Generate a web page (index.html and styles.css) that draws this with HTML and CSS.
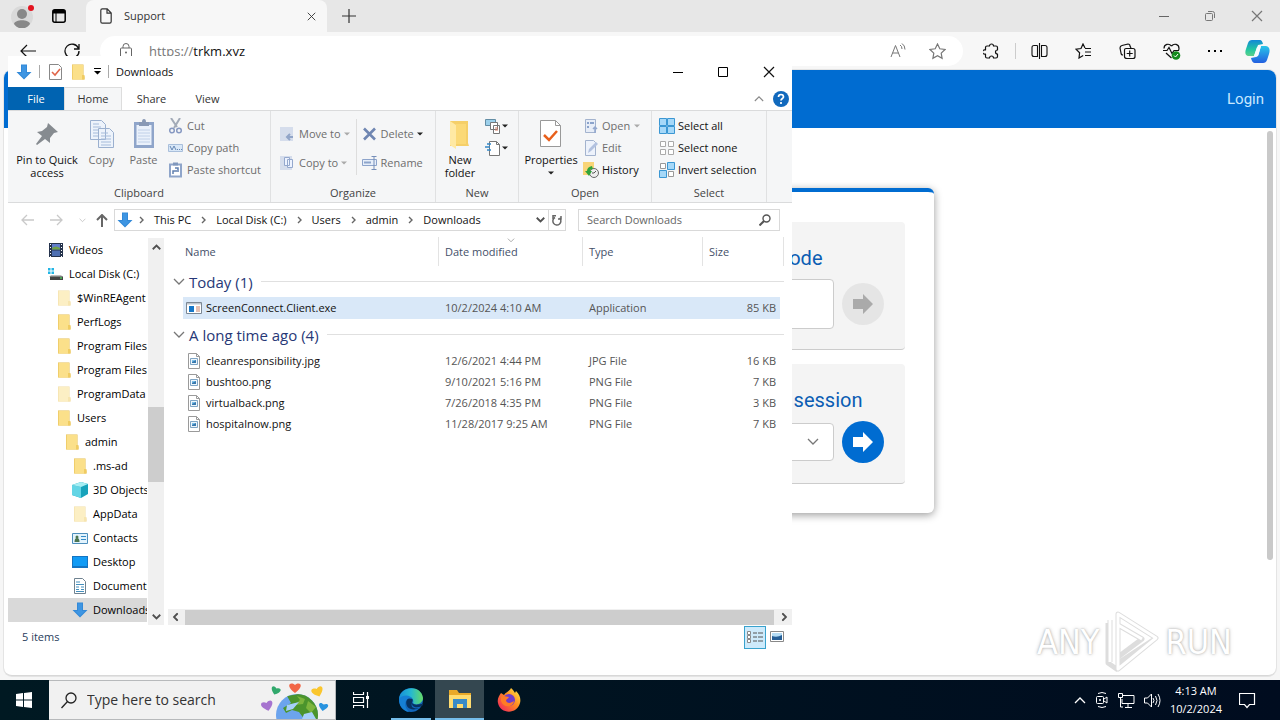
FILE: index.html
```
<!DOCTYPE html>
<html lang="en">
<head>
<meta charset="utf-8">
<meta name="viewport" content="width=device-width, initial-scale=1">
<title>Support</title>
<link rel="stylesheet" href="styles.css">
</head>
<body>
<svg class="defs" aria-hidden="true">
  <symbol id="folder" viewBox="0 0 16 16"><path d="M2 .5h11.5v11l1 1V15.500H2z" fill="#e5bd4d"/><path d="M2.500 1h10.500v12l-1 2.500H2.500z" fill="#fbe08a"/><path d="M12 11h2.500v4.500H12z" fill="#f0cc62"/></symbol>
  <symbol id="down" viewBox="0 0 16 16"><path d="M5 .5h6V8h4.500L8 15.500.5 8H5z" fill="#3289d8"/><path d="M6 1.500h4V9h3L8 14 3 9h3z" fill="#3e95e2"/></symbol>
  <symbol id="image" viewBox="0 0 16 16"><path d="M2.500.5h8l3 3v12h-11z" fill="#fff" stroke="#9a9a9a"/><path d="M10.500.5v3h3" fill="none" stroke="#9a9a9a"/><path d="M4.500 5.500h7v6h-7z" fill="#eef6fb" stroke="#7fa5c5"/><path d="M6 7h4v3H6z" fill="#3778ae"/><path d="M6 7h4L6 9z" fill="#7cc0ea"/></symbol>
  <symbol id="crumb" viewBox="0 0 7 8"><path d="M2 1l3 3-3 3" fill="none" stroke="#666" stroke-width="1.400"/></symbol>
  <symbol id="tri" viewBox="0 0 6 4"><path d="M0 .5h6L3 3.500z" fill="currentColor"/></symbol>
  <symbol id="chev" viewBox="0 0 12 8"><path d="M1 1l5 5 5-5" fill="none" stroke="currentColor" stroke-width="1.300"/></symbol>
  <symbol id="chev-bold" viewBox="0 0 12 8"><path d="M1 1l5 5 5-5" fill="none" stroke="currentColor" stroke-width="2.400"/></symbol>
  <symbol id="cross" viewBox="0 0 12 12"><path d="M1 1l10 10M11 1L1 11" fill="none" stroke="currentColor" stroke-width="1.200"/></symbol>
  <symbol id="go" viewBox="0 0 20 20"><path d="M0 5h10V0l10 10-10 10v-5H0z" fill="currentColor"/></symbol>
</svg>

<div class="desktop">
  <section class="browser" aria-label="Browser">
    <div class="tabstrip">
      <button class="plain profile" aria-label="Profile"><svg width="24" height="24" viewBox="0 0 24 24"><circle cx="11" cy="13" r="11" fill="#d9d9d9"/><circle cx="11" cy="10" r="5" fill="#888"/><path d="M3 20c1-5 15-5 16 0-4 6-12 6-16 0z" fill="#888"/><circle cx="20" cy="4" r="3" fill="#e3131f"/></svg></button>
      <button class="plain workspaces" aria-label="Tab actions"><svg width="14" height="14" viewBox="0 0 14 14"><rect x=".8" y=".8" width="12.400" height="12.400" rx="2" fill="none" stroke="#000" stroke-width="1.500"/><path d="M1 1h12v3.500H1zM3.500 4h1v9h-1z"/></svg></button>
      <div class="tab">
        <svg width="12" height="16" viewBox="0 0 12 16"><path d="M.8 2.500C.8 1.500 1.300.8 2.300.8h4.900l4 4.200v8.500c0 1-.5 1.700-1.500 1.700H2.300c-1 0-1.500-.7-1.500-1.700zM7 1v4.200h4" fill="none" stroke="#333" stroke-width="1.200"/></svg>
        <span class="tab-title">Support</span>
        <button class="plain" aria-label="Close tab"><svg class="i9"><use href="#cross"/></svg></button>
      </div>
      <button class="plain newtab" aria-label="New tab"><svg width="14" height="14" viewBox="0 0 14 14"><path d="M7 0v14M0 7h14" stroke="#333" stroke-width="1.200"/></svg></button>
      <div class="browser-controls">
        <button class="plain" aria-label="Minimize"><svg width="10" height="10" viewBox="0 0 10 10"><path d="M0 5.500h10" stroke="#666"/></svg></button>
        <button class="plain" aria-label="Restore"><svg width="10" height="10" viewBox="0 0 10 10"><path d="M.5 3.500q0-1 1-1h5q1 0 1 1v5q0 1-1 1h-5q-1 0-1-1zM3 .5h4.500q2 0 2 2V7" fill="none" stroke="#777"/></svg></button>
        <button class="plain" aria-label="Close"><svg class="i12"><use href="#cross"/></svg></button>
      </div>
    </div>
    <div class="toolbar">
      <button class="plain" aria-label="Back"><svg width="16" height="14" viewBox="0 0 16 14"><path d="M16 7H1M7 1L1 7l6 6" fill="none" stroke="#111" stroke-width="1.200"/></svg></button>
      <button class="plain" aria-label="Refresh"><svg width="16" height="16" viewBox="0 0 16 16"><path d="M14.500 5.500A7 7 0 1 0 15 8M15 1v5h-5" fill="none" stroke="#111" stroke-width="1.300"/></svg></button>
      <div class="omnibox">
        <svg width="12" height="16" viewBox="0 0 12 16"><path d="M1.500 5h9q1 0 1 1v8q0 1-1 1h-9q-1 0-1-1V6q0-1 1-1zM3 5V3.500a3 3 0 0 1 6 0V5" fill="none" stroke="#666"/><circle cx="6" cy="9.500" r="1" fill="#666"/></svg>
        <label class="url"><span>https://</span><input type="text" value="trkm.xyz" aria-label="Address"></label>
        <svg width="17" height="16" viewBox="0 0 17 16"><path d="M1 14L5.500 2.500 10 14M2.500 10h6M10 2q2 1 2 4M12 .5q3 2 3 6" fill="none" stroke="#777"/></svg>
        <svg width="17" height="17" viewBox="0 0 17 17"><path d="M8.500 1l2.300 4.800 5.200.7-3.800 3.600.9 5.200-4.600-2.500-4.600 2.500.9-5.200L1 6.500l5.200-.7z" fill="none" stroke="#777" stroke-width="1.200"/></svg>
      </div>
      <div class="tools">
        <button class="plain" aria-label="Extensions"><svg width="17" height="17" viewBox="0 0 17 17"><path d="M4 3h2.500a2 2 0 1 1 4 0H13q1.500 0 1.500 1.500V7a1.600 1.600 0 1 0 0 4v2.500q0 1.500-1.500 1.500h-2.500a2 2 0 0 0-4 0H4q-1.500 0-1.500-1.500V11a2.200 2.200 0 1 1 0-4V4.500Q2.500 3 4 3z" fill="none" stroke="#111" stroke-width="1.200" stroke-linejoin="round"/></svg></button>
        <span class="tool-rule"></span>
        <button class="plain" aria-label="Split screen"><svg width="17" height="16" viewBox="0 0 17 16"><path d="M6.500 2.500H3q-2 0-2 2v7q0 2 2 2h3.500V2.500M8.500 0v16M10.500 2.500H14q2 0 2 2v7q0 2-2 2h-3.500z" fill="none" stroke="#111" stroke-width="1.100"/></svg></button>
        <button class="plain" aria-label="Favorites"><svg width="17" height="16" viewBox="0 0 17 16"><path d="M10 5L8 1 6 5.500l-5 .7 3.600 3.500L4 15l4.200-2.500M10 5.500h6M10 9h6M10 12.500h6" fill="none" stroke="#111" stroke-width="1.200"/></svg></button>
        <button class="plain" aria-label="Collections"><svg width="17" height="17" viewBox="0 0 17 17"><path d="M4 12q-2 0-2-2L1 5q0-2 2-2.500L9 1q2 0 2 2l1 2M7 5.500h7q2 0 2 2v6q0 2-2 2H8q-2.500 0-2.500-2V7q0-1.500 1.500-1.500zM10.700 7.500v6M7.700 10.500h6" fill="none" stroke="#111" stroke-width="1.200"/></svg></button>
        <button class="plain" aria-label="Browser essentials"><svg width="18" height="17" viewBox="0 0 18 17"><path d="M8.500 3C6 0 1 1 1 5.500h0M8.500 3C11 0 16 1 16 5.500q0 1-.7 2.500M3 10l5.500 5M0 7.500h4l2-3 3 6 2-3h4" fill="none" stroke="#111" stroke-width="1.200"/><circle cx="13" cy="12.500" r="4.300" fill="#138a1d"/><path d="M11 12.500l1.500 1.500 2.500-3" fill="none" stroke="#fff"/></svg></button>
        <button class="plain" aria-label="More"><svg width="14" height="4" viewBox="0 0 14 4"><path d="M0 1h2v2H0zM6 1h2v2H6zM12 1h2v2h-2z"/></svg></button>
        <button class="plain copilot" aria-label="Copilot"><svg width="25" height="23" viewBox="0 0 25 23"><defs><linearGradient id="cp1" x2="0" y2="1"><stop stop-color="#1388d7"/><stop offset=".6" stop-color="#22c7a1"/><stop offset="1" stop-color="#5fd08a"/></linearGradient><linearGradient id="cp2" x2="0" y2="1"><stop stop-color="#28c5e9"/><stop offset="1" stop-color="#235fe0"/></linearGradient></defs><path d="M7 0h8q2 0 3 4l-5 1-4 11H3q-4-1-2-7l2-6q1-3 4-3z" fill="url(#cp1)"/><path d="M16 6h5q5 1 3 8l-2 6q-1 3-4 3h-8q-3 0-4-5l5-1q2 0 3-4z" fill="url(#cp2)"/><path d="M12 7l4-1-3 10H9z" fill="#f5fbff"/></svg></button>
      </div>
    </div>
    <div class="viewport">
      <header class="site-header"><a href="#">Login</a></header>
      <div class="site-body">
        <main class="card">
          <form class="panel">
            <h2 class="code-title"><label for="code">Code</label></h2>
            <div class="field"><input id="code" class="box tall" type="text"><button class="go off" type="button" disabled aria-label="Join with code"><svg class="i20"><use href="#go"/></svg></button></div>
          </form>
          <form class="panel second">
            <h2 class="session-title"><label for="session">session</label></h2>
            <div class="field"><span class="select-wrap"><select id="session" class="box"><option></option></select><svg class="i12"><use href="#chev"/></svg></span><button class="go" type="button" aria-label="Join session"><svg class="i20"><use href="#go"/></svg></button></div>
          </form>
        </main>
        <div class="page-scroll"></div>
      </div>
    </div>
  </section>

  <section class="explorer" aria-label="Downloads">
    <div class="titlebar">
      <svg class="i16"><use href="#down"/></svg><span class="tick"></span>
      <svg width="14" height="16" viewBox="0 0 14 16"><path d="M.5.5h9l3 3v12H.5z" fill="#fff" stroke="#888"/><path d="M3 8l3 3 5-6" fill="none" stroke="#e0664a" stroke-width="1.600"/></svg>
      <svg class="i16"><use href="#folder"/></svg>
      <svg class="qat" viewBox="0 0 7 7"><path d="M0 0h7v1H0zM0 3h7L3.500 6.500z"/></svg><span class="tick"></span>
      <span class="title">Downloads</span>
      <div class="controls">
        <button class="plain" aria-label="Minimize"><svg width="10" height="10" viewBox="0 0 10 10"><path d="M0 5.500h10" stroke="#000"/></svg></button>
        <button class="plain" aria-label="Maximize"><svg width="10" height="10" viewBox="0 0 10 10"><path d="M.5.5h9v9h-9z" fill="none" stroke="#000"/></svg></button>
        <button class="plain" aria-label="Close"><svg class="i12"><use href="#cross"/></svg></button>
      </div>
    </div>
    <nav class="ribbon-tabs">
      <button class="plain file">File</button><button class="plain home">Home</button><button class="plain share">Share</button><button class="plain view">View</button>
      <div class="help"><svg class="collapse"><use href="#chev"/></svg><svg width="16" height="16" viewBox="0 0 16 16"><circle cx="8" cy="8" r="8" fill="#1169bd"/><path d="M5.500 6q0-2.500 2.500-2.500T10.500 6C10.500 7.500 8 7.500 8 9.500M8 11v2" fill="none" stroke="#fff" stroke-width="1.700"/></svg></div>
    </nav>
    <div class="ribbon">
      <div class="group g-clip">
        <div class="group-body">
          <button class="plain big pin"><svg width="32" height="32" viewBox="0 0 32 32"><path d="M17 5l10 9-4 1-4 5 0 5-5-4-8 6-1-1 6-8-5-4 5-1 5-4z" fill="#868b90"/></svg><span>Pin to Quick access</span></button>
          <button class="plain big copy dim"><svg width="32" height="32" viewBox="0 0 32 32"><path d="M4.500 2.500h11l4 4v15h-15zM12.500 10.500h11l4 4v15h-15z" fill="#edf3fb" stroke="#9bb0cf"/><path d="M7 6h6M7 9h8M7 12h5M7 15h5M7 18h5M15 15h7M15 18h10M15 21h10M15 24h10M15 27h10" stroke="#a5bbda"/></svg><span>Copy</span></button>
          <button class="plain big paste dim"><svg width="32" height="32" viewBox="0 0 32 32"><path d="M6 4h20v26H6z" fill="#8fa5ca"/><path d="M8.500 7h15v20h-15z" fill="#eaf1fb"/><path d="M11 4h3q0-3 2-3t2 3h3v4H11z" fill="#8999b5"/><path d="M10 12h12M10 15h12M10 18h12M10 21h12M10 24h12" stroke="#c0d0e8"/></svg><span>Paste</span></button>
          <div class="stack">
            <button class="plain dim"><svg class="i16" viewBox="0 0 16 16"><path d="M3 0l6 9M12 0L6 10" stroke="#a3abb8" stroke-width="2"/><circle cx="4" cy="12.500" r="2.300" fill="none" stroke="#8799c2" stroke-width="1.500"/><circle cx="11" cy="12.500" r="2.300" fill="none" stroke="#8799c2" stroke-width="1.500"/></svg>Cut</button>
            <button class="plain dim"><svg class="i16" viewBox="0 0 16 16"><path d="M.5 4.500h14v7H.5z" fill="#d8e7f7" stroke="#a9bfdb"/><path d="M2 6l2 4 2-4 2 4M9 9.500h1M11 9.500h1M13 9.500h1" fill="none" stroke="#6688b5"/></svg>Copy path</button>
            <button class="plain dim"><svg class="i16" viewBox="0 0 16 16"><path d="M2 2.500h11v12H2z" fill="#fff" stroke="#8fa5ca" stroke-width="2"/><path d="M5 .5h5v3H5z" fill="#8098bd"/><path d="M5 12V9h4M7 6h3v4" fill="none" stroke="#6080b0" stroke-width="1.500"/></svg>Paste shortcut</button>
          </div>
        </div><div class="group-name">Clipboard</div>
      </div>
      <div class="group g-org">
        <div class="group-body two">
          <div class="stack wide">
            <button class="plain dim"><svg class="i16" viewBox="0 0 16 16"><path d="M0 1h13v14H0z" fill="#d5ddec"/><path d="M13 11H7m3-3l-3 3 3 3" fill="none" stroke="#91a5c8" stroke-width="2"/></svg>Move to<svg class="tri"><use href="#tri"/></svg></button>
            <button class="plain dim"><svg class="i16" viewBox="0 0 16 16"><path d="M0 1h12v14H0z" fill="#d5ddec"/><path d="M4.500 2.500h5v8h-5zM7.500 4.500h5v8h-5z" fill="#edf3ff" stroke="#94a8cd"/></svg>Copy to<svg class="tri"><use href="#tri"/></svg></button>
          </div>
          <span class="inner-rule"></span>
          <div class="stack wide">
            <button class="plain dim"><svg class="i16" viewBox="0 0 16 16"><path d="M2 2.500l11 11M13 2.500l-11 11" stroke="#6f86b2" stroke-width="2.600"/></svg>Delete<svg class="tri dark"><use href="#tri"/></svg></button>
            <button class="plain dim"><svg class="i16" viewBox="0 0 16 16"><path d="M.5 4.500h14v6H.5z" fill="#e7effa" stroke="#8da4cb"/><path d="M2 7.500h7" stroke="#8da4cb" stroke-width="2"/><path d="M9.500 1.500h5M12 2v12M9.500 14.500h5" stroke="#768fb9"/></svg>Rename</button>
          </div>
        </div><div class="group-name">Organize</div>
      </div>
      <div class="group g-new">
        <div class="group-body">
          <button class="plain big newf"><svg width="32" height="32" viewBox="0 0 32 32"><path d="M6 3h18v22l1 3H6z" fill="#f5cf69"/><path d="M6 3l6 4v24l-6-4z" fill="#ffe9a4"/><path d="M12 6h10v20H12z" fill="#fbd977"/></svg><span>New folder</span></button>
          <div class="stack mini">
            <button class="plain" aria-label="New item"><svg class="i16" viewBox="0 0 16 16"><path d="M.5 1.500h10v6H.5z" fill="#9cd0eb" stroke="#638da5"/><path d="M5.500 4.500h7v7h-7zM8.500 7.500h6v8h-6z" fill="#fff" stroke="#777"/><path d="M10 10h3M10 12h3" stroke="#d67c65"/></svg><svg class="tri dark"><use href="#tri"/></svg></button>
            <button class="plain" aria-label="Easy access"><svg class="i16" viewBox="0 0 16 16"><path d="M4.500 1.500h7l3 3v11h-10z" fill="#fff" stroke="#777"/><path d="M11.500 1.500v3h3" fill="none" stroke="#777"/><path d="M2 4h4M0 7h5M2 10h4" stroke="#3388c8" stroke-width="1.500"/></svg><svg class="tri dark"><use href="#tri"/></svg></button>
          </div>
        </div><div class="group-name">New</div>
      </div>
      <div class="group g-open">
        <div class="group-body">
          <button class="plain big props"><svg width="32" height="32" viewBox="0 0 32 32"><path d="M5.500 2.500h15l5 5v21h-20z" fill="#fff" stroke="#999"/><path d="M20.500 2.500v5h5" fill="none" stroke="#999"/><path d="M9 17l5 5 8-9" fill="none" stroke="#e8601c" stroke-width="2.500"/></svg><span>Properties</span><svg class="tri dark"><use href="#tri"/></svg></button>
          <div class="stack">
            <button class="plain dim"><svg class="i16" viewBox="0 0 16 16"><path d="M2.500 1.500h10v13h-10z" fill="#e7edf7" stroke="#a3b3ce"/><path d="M4 4h2v2H4zM4 8h2v2H4zM7 4h4v2H7z" fill="#8ba3cb"/><path d="M12 15V9m-2 2l2-2 2 2" fill="none" stroke="#93a8ce" stroke-width="1.500"/></svg>Open<svg class="tri"><use href="#tri"/></svg></button>
            <button class="plain dim"><svg class="i16" viewBox="0 0 16 16"><path d="M2.500.5h8l2 2v13h-10z" fill="#edf2fb" stroke="#a3b3ce"/><path d="M5 13l1-4 7-7 2 2-7 7z" fill="#b2c1df"/></svg>Edit</button>
            <button class="plain"><svg class="i16" viewBox="0 0 16 16"><path d="M0 0h11v13H0z" fill="#f8d477"/><circle cx="11" cy="11" r="4.500" fill="#eee" stroke="#666"/><path d="M11 11l2-2M11 11h-2" stroke="#555"/><path d="M9 4Q4 5 4 9H2l4 5 3-5H7q0-2 3-2z" fill="#31a43b"/></svg>History</button>
          </div>
        </div><div class="group-name">Open</div>
      </div>
      <div class="group g-sel">
        <div class="group-body">
          <div class="stack">
            <button class="plain"><svg class="i16" viewBox="0 0 16 16"><path d="M.5.5h7v7h-7zM8.500.5h7v7h-7zM.5 8.500h7v7h-7zM8.500 8.500h7v7h-7z" fill="#a6d8f8" stroke="#3b97d3"/></svg>Select all</button>
            <button class="plain"><svg class="i16" viewBox="0 0 16 16"><path d="M1.500 1.500h5v5h-5zM9.500 1.500h5v5h-5zM1.500 9.500h5v5h-5zM9.500 9.500h5v5h-5z" fill="#fff" stroke="#aaa"/></svg>Select none</button>
            <button class="plain"><svg class="i16" viewBox="0 0 16 16"><path d="M1.500 1.500h5v5h-5zM9.500 9.500h5v5h-5z" fill="#fff" stroke="#999"/><path d="M8.500.5h7v7h-7zM.5 8.500h7v7h-7z" fill="#a6d8f8" stroke="#3b97d3"/></svg>Invert selection</button>
          </div>
        </div><div class="group-name">Select</div>
      </div>
    </div>

    <div class="address-row">
      <button class="plain" aria-label="Back"><svg width="13" height="12" viewBox="0 0 13 12"><path d="M13 6H1M6 1L1 6l5 5" fill="none" stroke="#c9c9c9" stroke-width="1.300"/></svg></button>
      <button class="plain" aria-label="Forward"><svg width="13" height="12" viewBox="0 0 13 12"><path d="M0 6h12M7 1l5 5-5 5" fill="none" stroke="#c9c9c9" stroke-width="1.300"/></svg></button>
      <button class="plain recent" aria-label="Recent"><svg class="tiny"><use href="#chev"/></svg></button>
      <button class="plain go-up" aria-label="Up"><svg width="12" height="13" viewBox="0 0 12 13"><path d="M6 13V1M1 6l5-5 5 5" fill="none" stroke="#666" stroke-width="2"/></svg></button>
      <div class="address">
        <svg class="i16 place"><use href="#down"/></svg><svg class="crumb"><use href="#crumb"/></svg><button class="plain">This PC</button><svg class="crumb"><use href="#crumb"/></svg><button class="plain">Local Disk (C:)</button><svg class="crumb"><use href="#crumb"/></svg><button class="plain">Users</button><svg class="crumb"><use href="#crumb"/></svg><button class="plain">admin</button><svg class="crumb"><use href="#crumb"/></svg><button class="plain">Downloads</button>
        <button class="plain drop" aria-label="Previous locations"><svg class="small"><use href="#chev-bold"/></svg></button>
        <button class="plain refresh" aria-label="Refresh"><svg width="10" height="11" viewBox="0 0 10 11"><path d="M3 2.500A4 4 0 1 0 7.500 3M4 .8H1v3.500M9 1v3H6" fill="none" stroke="#666" stroke-width="1.500"/></svg></button>
      </div>
      <label class="search"><input type="text" placeholder="Search Downloads" aria-label="Search Downloads"><svg width="12" height="12" viewBox="0 0 12 12"><circle cx="7.500" cy="4.500" r="3.500" fill="none" stroke="#555" stroke-width="1.400"/><path d="M5 7l-4.500 4.500" stroke="#555" stroke-width="2"/></svg></label>
    </div>

    <div class="content">
      <ul class="tree">
        <li><svg class="i16" viewBox="0 0 16 16"><path d="M1 1h14v14H1z" fill="#25334d"/><path d="M4 2h8v5.500H4z" fill="#627dcc"/><path d="M4 6q4-3 8 0v1.500H4z" fill="#71a347"/><path d="M4 8.500h8V14H4z" fill="#4e6fb2"/><path d="M2.500 2v13M13.500 2v13" stroke="#fff" stroke-dasharray="1 2"/></svg>Videos</li>
        <li><svg class="i16" viewBox="0 0 16 16"><path d="M0 2h2.500v2.500H0zM3.500 2H6v2.500H3.500zM0 5.500h2.500V8H0zM3.500 5.500H6V8H3.500z" fill="#22b5e5"/><path d="M3 9h10l2 2H1z" fill="#bbb"/><path d="M2 10.500h13V14H2z" fill="#444"/><path d="M12 12h2" stroke="#5f6"/></svg>Local Disk (C:)</li>
        <li class="l1 faded"><svg class="i16"><use href="#folder"/></svg>$WinREAgent</li>
        <li class="l1"><svg class="i16"><use href="#folder"/></svg>PerfLogs</li>
        <li class="l1"><svg class="i16"><use href="#folder"/></svg>Program Files</li>
        <li class="l1"><svg class="i16"><use href="#folder"/></svg>Program Files (x86)</li>
        <li class="l1 faded"><svg class="i16"><use href="#folder"/></svg>ProgramData</li>
        <li class="l1"><svg class="i16"><use href="#folder"/></svg>Users</li>
        <li class="l2"><svg class="i16"><use href="#folder"/></svg>admin</li>
        <li class="l3"><svg class="i16"><use href="#folder"/></svg>.ms-ad</li>
        <li class="l3"><svg class="i16" viewBox="0 0 16 16"><path d="M0 3l9-3 7 2v10l-7 4-9-3z" fill="#17a3bb"/><path d="M0 3l9 2v11l-9-3z" fill="#63d5e5"/><path d="M0 3l9-3 7 2-7 3z" fill="#a7eef3"/></svg>3D Objects</li>
        <li class="l3 faded"><svg class="i16"><use href="#folder"/></svg>AppData</li>
        <li class="l3"><svg class="i16" viewBox="0 0 16 16"><path d="M.5 3.500h15v10H.5z" fill="#e2f3fd" stroke="#4d8ebc"/><circle cx="5" cy="7" r="1.500" fill="#4b7551"/><path d="M2.500 12q0-4 2.500-4t2.500 4z" fill="#4b7551"/><path d="M9 6.500h5M9 9.500h5" stroke="#348bc7"/></svg>Contacts</li>
        <li class="l3"><svg class="i16" viewBox="0 0 16 16"><path d="M0 2h16v12H0z" fill="#1474c2"/><path d="M1 3h14v9H1z" fill="#119bf5"/></svg>Desktop</li>
        <li class="l3"><svg class="i16" viewBox="0 0 16 16"><path d="M2.500.5h8l3 3v12h-11z" fill="#fff" stroke="#6f8290"/><path d="M4 4h4M4 6.500h8M4 9h3M9 9h3M4 11.500h3M9 11.500h3M4 13.500h8" stroke="#448fbd"/></svg>Documents</li>
        <li class="l3 current"><svg class="i16"><use href="#down"/></svg>Downloads</li>
      </ul>
      <div class="vscroll"><svg class="small up"><use href="#chev-bold"/></svg><span class="thumb"></span><svg class="small"><use href="#chev-bold"/></svg></div>
      <div class="files">
        <table>
          <colgroup><col><col class="c-date"><col class="c-type"><col class="c-size"></colgroup>
          <thead><tr><th>Name</th><th class="sorted">Date modified<svg class="sort"><use href="#chev"/></svg></th><th>Type</th><th>Size</th></tr></thead>
          <tbody>
            <tr class="section"><th colspan="4"><div><svg class="i12"><use href="#chev"/></svg><span>Today (1)</span></div></th></tr>
            <tr class="selected"><td><svg class="i16" viewBox="0 0 16 16"><path d="M.5 2.500h15v11H.5z" fill="#fff" stroke="#7b8794"/><path d="M1 3h14v1.500H1z" fill="#bcc5ce"/><path d="M3 6h5v6H3z" fill="#1677c8"/><path d="M10 7h4M10 9h4M10 11h4" stroke="#c78069"/></svg>ScreenConnect.Client.exe</td><td>10/2/2024 4:10 AM</td><td>Application</td><td>85 KB</td></tr>
          </tbody>
          <tbody>
            <tr class="section"><th colspan="4"><div><svg class="i12"><use href="#chev"/></svg><span>A long time ago (4)</span></div></th></tr>
            <tr><td><svg class="i16"><use href="#image"/></svg>cleanresponsibility.jpg</td><td>12/6/2021 4:44 PM</td><td>JPG File</td><td>16 KB</td></tr>
            <tr><td><svg class="i16"><use href="#image"/></svg>bushtoo.png</td><td>9/10/2021 5:16 PM</td><td>PNG File</td><td>7 KB</td></tr>
            <tr><td><svg class="i16"><use href="#image"/></svg>virtualback.png</td><td>7/26/2018 4:35 PM</td><td>PNG File</td><td>3 KB</td></tr>
            <tr><td><svg class="i16"><use href="#image"/></svg>hospitalnow.png</td><td>11/28/2017 9:25 AM</td><td>PNG File</td><td>7 KB</td></tr>
          </tbody>
        </table>
        <div class="hscroll"><svg class="small left"><use href="#chev-bold"/></svg><span class="thumb"></span><svg class="small right"><use href="#chev-bold"/></svg></div>
      </div>
    </div>
    <footer class="status"><span>5 items</span>
      <button class="plain details" aria-label="Details view"><svg width="18" height="16" viewBox="0 0 18 16"><path d="M1.500 2.500h3v3h-3zM1.500 6.500h3v3h-3zM1.500 10.500h3v3h-3z" fill="#fff" stroke="#888"/><path d="M7 4h4M12 4h5M7 8h4M12 8h5M7 12h4M12 12h5" stroke="#555"/></svg></button>
      <button class="plain" aria-label="Large icons"><svg width="14" height="12" viewBox="0 0 14 12"><path d="M.5.500h13v10H.5z" fill="#fff" stroke="#888"/><path d="M2 2h10v7H2z" fill="#b4dcf5"/><path d="M2 5q5 2 10-1v5H2z" fill="#255e96"/></svg></button>
    </footer>
  </section>

  <div class="watermark" aria-label="ANY RUN"><span>ANY</span><svg width="58" height="64" viewBox="0 0 58 64"><g fill="none" stroke-linejoin="round"><path d="M15 4l38 24-38 31zM15 15l24 14-24 18M7 10v42M15 53l38-25M5 13v40l10 7" stroke="#ddd" stroke-width="5"/><path d="M15 4l38 24-38 31zM15 15l24 14M7 10v42" stroke="#fff" stroke-width="3"/></g></svg><span>RUN</span></div>

  <footer class="taskbar">
    <button class="plain start" aria-label="Start"><svg width="16" height="16" viewBox="0 0 16 16"><path d="M0 2l7-1v6.500H0zM8 1l8-1v7.500H8zM0 8.500h7V15l-7-1zM8 8.500h8V16l-8-1z" fill="#fff"/></svg></button>
    <label class="task-search"><svg width="16" height="17" viewBox="0 0 16 17"><circle cx="10" cy="6" r="5" fill="none" stroke="#222" stroke-width="1.300"/><path d="M6.500 9.500L.5 16" stroke="#222" stroke-width="1.300"/></svg><input type="text" placeholder="Type here to search" aria-label="Type here to search">
      <svg class="earth" width="70" height="38" viewBox="0 0 70 38"><defs><path id="heart" d="M0 10C-10 3-5-2 0 2c5-4 10 1 0 8z"/><clipPath id="globe"><circle cx="36" cy="34" r="21"/></clipPath></defs><circle cx="36" cy="34" r="21" fill="#6ca4ed"/><g clip-path="url(#globe)"><path d="M26 15l17-3 15 14v14l-8-5-6 4-6-8-7-2-6 3-3-5 8-5z" fill="#4b942c"/><path d="M36 15l8 3-2 5-8 1 5-5zM47 20l8 6-5 6-5-5z" fill="#7db53d"/><path d="M26 24l12-3-6 7-7 2zM43 33l8-2 4 7H41z" fill="#a6d0fa"/></g><use href="#heart" x="34" y="2" fill="#f26646"/><use href="#heart" fill="#31a86c" transform="translate(16 6) rotate(20) scale(.8)"/><use href="#heart" fill="#fac62d" transform="translate(55 6) rotate(-20)"/><use href="#heart" fill="#a674cf" transform="translate(5 20) rotate(-15)"/><use href="#heart" fill="#2893df" transform="translate(63 22) rotate(10) scale(.8)"/></svg></label>
    <button class="plain app taskview" aria-label="Task view"><svg width="17" height="16" viewBox="0 0 17 16"><path d="M.5 0v2.500h10V0M.5 16v-2.500h10V16M.5 5.500h10v5H.5zM14.500 0v16" fill="none" stroke="#fff" stroke-width="1.200"/><path d="M13 4h3v3h-3z" fill="#fff"/></svg></button>
    <button class="plain app edge" aria-label="Edge"><svg width="24" height="24" viewBox="0 0 24 24"><defs><linearGradient id="ed" x2="1"><stop stop-color="#168fd8"/><stop offset=".5" stop-color="#26b9d0"/><stop offset="1" stop-color="#65db66"/></linearGradient></defs><circle cx="12" cy="12" r="12" fill="#1266bb"/><path d="M0 11C1-2 22-4 24 10c0 6-8 8-10 5 2-7-7-8-14-4z" fill="url(#ed)"/><path d="M9 10c-5 6 1 16 13 9-6 3-11 1-9-4 3 3 7 1 11 1v1c-3 3-12 4-11-3 2-3-1-5-4-4z" fill="#073260"/><path d="M0 11c4-5 12-4 13 0-6-3-10 6-3 13C4 23 0 18 0 11z" fill="#1680d5"/></svg></button>
    <button class="plain app active" aria-label="File Explorer"><svg width="22" height="20" viewBox="0 0 22 20"><path d="M0 1h8l2 3h12v15H0z" fill="#e9a929"/><path d="M0 6h22v13H0z" fill="#ffdc70"/><path d="M4 10h14v9h-4v-4H8v4H4z" fill="#398bc7"/></svg></button>
    <button class="plain app" aria-label="Firefox"><svg width="24" height="24" viewBox="0 0 24 24"><defs><linearGradient id="ff" x1="1" x2="0" y2="1"><stop stop-color="#fff34a"/><stop offset=".45" stop-color="#ff8b20"/><stop offset="1" stop-color="#ef1765"/></linearGradient></defs><path d="M4 5l3 2C9 4 12 4 14 0c2 2 3 3 4 5l1-2c4 4 5 8 4 12-3 12-20 11-22 0C0 11 2 8 4 5z" fill="url(#ff)"/><circle cx="12" cy="12" r="6" fill="#713cc9"/><path d="M4 9c3-2 5 0 8 0-1 2-3 2-3 4 2 3 5 2 8 0-1 7-11 7-13 0z" fill="#ff7b25"/></svg></button>
    <div class="tray">
      <svg class="i12 up"><use href="#chev"/></svg>
      <svg width="14" height="16" viewBox="0 0 14 16"><rect x="1.500" y="4.500" width="7" height="7" rx="1" fill="none" stroke="#fff"/><path d="M9 7l3-2v6l-3-2M3 1.500q4-2 8 0M3 14.500q4 2 8 0" fill="none" stroke="#fff"/><circle cx="5" cy="8" r="1" fill="#fff"/></svg>
      <svg width="17" height="15" viewBox="0 0 17 15"><path d="M5 2.500h11v8H4V6M10 11v3M7 14.500h7M.5.500h4v4h-4zM2.500 5v9H5" fill="none" stroke="#fff"/></svg>
      <svg width="17" height="15" viewBox="0 0 17 15"><path d="M.5 5h3l4-4v13l-4-4h-3zM9 5q2 2.500 0 5M11.500 3q3 4.500 0 9M14 1q4 6.500 0 13" fill="none" stroke="#fff"/></svg>
      <div class="clock"><span>4:13 AM</span><span>10/2/2024</span></div>
      <svg width="17" height="17" viewBox="0 0 17 17"><path d="M.5 1.500h15v11h-5L8 15.500l-2.500-3h-5z" fill="none" stroke="#fff" stroke-width="1.200"/></svg>
    </div>
  </footer>
</div>
</body>
</html>
```
FILE: styles.css
```
* { box-sizing: border-box; }
body { margin: 0; font: 11px/16px "Open Sans", "Noto Sans", sans-serif; color: #111; }
svg { flex: none; display: block; }
.defs { position: absolute; width: 0; height: 0; }
.plain { border: 0; padding: 0; margin: 0; background: none; font: inherit; color: inherit; display: flex; align-items: center; }
input { font: inherit; border: 0; padding: 0; background: none; min-width: 0; outline: 0; color: inherit; }
.i9 { width: 9px; height: 9px; }
.i12 { width: 12px; height: 12px; }
.i16 { width: 16px; height: 16px; }
.i20 { width: 20px; height: 20px; }
.small { width: 9px; height: 6px; color: #505050; }
.tiny { width: 7px; height: 5px; color: #bbb; }
.up { transform: rotate(180deg); }

.desktop { position: relative; height: 100vh; min-height: 660px; display: flex; flex-direction: column; overflow: hidden; background: #f6f6f6; }

/* Browser */
.browser { flex: 1; min-height: 0; display: flex; flex-direction: column; }
.tabstrip { height: 32px; display: flex; background: #e7e7e7; }
.profile { padding-left: 11px; width: 52px; }
.workspaces { width: 34px; }
.tab { width: 241px; background: #f7f7f7; border-radius: 8px 8px 0 0; display: flex; align-items: center; padding: 0 11px 0 14px; gap: 12px; color: #333; }
.tab-title { flex: 1; }
.newtab { padding-left: 15px; }
.browser-controls { margin-left: auto; display: flex; gap: 36px; padding-right: 17px; color: #777; }
.toolbar { height: 38px; display: flex; align-items: center; padding: 0 10px 0 20px; background: #f7f7f7; gap: 28px; }
.omnibox { flex: 1; height: 30px; margin-left: -8px; background: #fff; border-radius: 15px; display: flex; align-items: center; gap: 22px; padding: 0 17px 0 20px; }
.url { flex: 1; display: flex; font-size: 13px; margin-left: -5px; }
.url span { color: #777; }
.url input { flex: 1; }
.tools { display: flex; align-items: center; gap: 27px; margin-left: -8px; }
.tool-rule { width: 1px; height: 16px; background: #ccc; margin: 0 -12px 0 -12px; }
.copilot { margin-left: -4px; }
.viewport { flex: 1; min-height: 0; margin: 0 4px 4px; border-radius: 8px; border-bottom: 1px solid #d8d8d8; box-shadow: 0 0 0 1px #e4e4e4; background: #fff; overflow: hidden; display: flex; flex-direction: column; }
.site-header { height: 58px; background: #006cd1; display: flex; align-items: center; justify-content: flex-end; padding-right: 12px; flex: none; }
.site-header a { font: 400 15px/20px Roboto, sans-serif; color: #c8e8ff; text-decoration: none; }
.site-body { flex: 1; display: flex; padding: 3px 3px 0 0; min-height: 0; }
.card { width: 600px; margin: 57px auto auto; border-top: 4px solid #006cd1; border-radius: 6px; padding: 30px 29px 29px; box-shadow: 0 2px 8px #0006; background: #fff; }
.page-scroll { width: 6px; height: 429px; margin-left: 4px; border-radius: 3px; background: #c9c9c9; }
.panel { background: #f4f4f4; border-radius: 4px; border-bottom: 1px solid #ccc; padding: 24px 21px 20px 20px; }
.second { margin-top: 14px; }
.panel h2 { margin: 0 0 9px; font: 400 20px/24px Roboto, sans-serif; color: #0b5db3; text-align: right; }
.panel .code-title { padding-right: 61px; }
.panel .session-title { padding-right: 21px; }
.field { display: flex; align-items: center; gap: 8px; }
.box { width: 100%; height: 38px; border: 1px solid #ccc; border-radius: 4px; background: #fff; appearance: none; }
.tall { height: 50px; }
.select-wrap { flex: 1; display: grid; align-items: center; justify-items: end; }
.select-wrap > * { grid-area: 1 / 1; }
.select-wrap svg { margin-right: 15px; color: #777; pointer-events: none; }
.go { flex: none; width: 42px; height: 42px; border: 0; border-radius: 50%; background: #006cd1; color: #fff; display: grid; place-items: center; padding: 0; }
.off { background: #e5e5e5; color: #aaa; }

/* File window, floating over the browser */
.explorer { position: absolute; left: 8px; top: 56px; bottom: 71px; width: 61.25%; background: #fff; display: flex; flex-direction: column; }
.titlebar { height: 31px; display: flex; align-items: center; padding-left: 8px; }
.tick { width: 1px; height: 13px; background: #aaa; margin: 0 9px 0 7px; }
.titlebar .tick ~ .i16 { margin: 0 8px 0 7px; }
.qat { width: 7px; height: 7px; }
.titlebar .title { margin-left: -2px; }
.controls { margin-left: auto; display: flex; gap: 35px; padding-right: 17px; }
.ribbon-tabs { height: 23px; display: flex; }
.ribbon-tabs button { justify-content: center; color: #333; }
.ribbon-tabs .file { width: 56px; background: #0063b1; color: #fff; }
.ribbon-tabs .home { width: 58px; background: #f5f6f7; border: 1px solid #ddd; border-bottom: 0; }
.share { width: 59px; }
.view { width: 53px; }
.help { margin-left: auto; display: flex; align-items: center; gap: 9px; padding-right: 3px; color: #888; }
.collapse { width: 10px; height: 7px; transform: rotate(180deg); }
.ribbon { display: flex; background: #f5f6f7; border: solid #dadbdc; border-width: 1px 0; }
.group { border-right: 1px solid #e0e1e2; height: 91px; flex: none; white-space: nowrap; }
.group-body { height: 73px; display: flex; padding-top: 4px; }
.group-name { text-align: center; color: #444; line-height: 18px; }
.g-clip { width: 263px; }
.g-org { width: 165px; }
.g-new { width: 83px; }
.g-open { width: 133px; }
.g-sel { width: 115px; }
.big { flex-direction: column; line-height: 13px; padding-top: 3px; }
.big span { white-space: normal; text-align: center; padding-top: 3px; }
.pin { width: 78px; }
.pin span { width: 74px; }
.copy { width: 31px; }
.paste { width: 53px; margin-right: -2px; }
.newf { width: 48px; }
.newf span { width: 36px; }
.props { width: 64px; }
.props .tri { margin-top: 5px; }
.dim { color: #6d6d6d; }
.stack button { height: 22px; gap: 3px; }
.stack .tri { margin-left: 1px; }
.tri { width: 6px; height: 4px; color: #aaa; }
.tri.dark { color: #222; }
.two { padding: 8px 0 0 9px; }
.wide button { height: 29px; }
.wide .tri { margin-left: 0; }
.inner-rule { width: 1px; height: 56px; background: #ddd; margin: 0 5px 0 6px; }
.mini { margin-left: 1px; }
.mini .tri { margin-left: -2px; }
.g-sel .stack { margin-left: 7px; }

.address-row { height: 34px; display: flex; align-items: center; padding: 0 12px 0 13px; }
.address-row > button { margin-right: 16px; }
.address-row > .recent { margin-right: 10px; }
.address-row > .go-up { margin-right: 6px; }
.address { flex: 1; min-width: 0; height: 22px; border: 1px solid #d9d9d9; display: flex; align-items: center; gap: 9px; padding-left: 2px; white-space: nowrap; }
.place { margin-right: -4px; }
.crumb { width: 7px; height: 8px; }
.drop { margin-left: auto; }
.refresh { border-left: 1px solid #d9d9d9; height: 20px; padding: 0 3px; margin-left: -6px; }
.search { width: 202px; height: 22px; border: 1px solid #d9d9d9; margin-left: 12px; display: flex; align-items: center; padding: 0 8px; }
.search input { flex: 1; }
.search input::placeholder { color: #666; }

.content { flex: 1; min-height: 0; display: flex; padding-top: 1px; }
.tree { list-style: none; margin: 0; padding: 0; width: 139px; overflow: hidden; color: #000; }
.tree li { height: 24px; display: flex; align-items: center; gap: 5px; padding-left: 40px; white-space: nowrap; }
.tree .l1 { padding-left: 48px; }
.tree .l2 { padding-left: 56px; }
.tree .l3 { padding-left: 64px; }
.faded svg { opacity: .5; }
.tree .current { background: #d9d9d9; }
.vscroll { width: 16px; margin-left: 1px; background: #f0f0f0; display: flex; flex-direction: column; align-items: center; padding: 6px 0 5px; }
.vscroll .thumb { width: 16px; height: 75px; background: #cdcdcd; margin: auto 0 132px; }
.files { flex: 1; min-width: 0; margin-left: 4px; display: flex; flex-direction: column; }
table { table-layout: fixed; width: calc(100% - 13px); margin: -1px 8px 0 5px; border-spacing: 0; text-align: left; }
.c-date { width: 144px; }
.c-type { width: 120px; }
.c-size { width: 81px; }
th { font-weight: 400; }
td, th { padding: 0 0 0 6px; height: 21px; white-space: nowrap; color: #555; }
thead th { height: 29px; border-right: 1px solid #e3e3e3; color: #445069; }
thead th:first-child { padding-left: 12px; }
.sorted { position: relative; }
.sort { position: absolute; left: 68px; top: 1px; width: 8px; height: 5px; color: #999; }
.section th { height: 31px; padding: 0; font-size: 15px; color: #273877; }
.section div { display: flex; align-items: center; gap: 4px; }
.section svg { height: 8px; color: #777; }
.section div::after { content: ""; flex: 1; height: 1px; background: #e0e0e0; margin-left: 4px; }
td:first-child { display: flex; align-items: center; gap: 4px; padding-left: 3px; border-left: 10px solid transparent; background-clip: padding-box; color: #111; }
td:last-child { text-align: right; padding-right: 4px; border-right: 4px solid transparent; background-clip: padding-box; }
.selected td { background-color: #d9e8f8; height: 22px; }
.hscroll { height: 16px; margin-top: auto; display: flex; align-items: center; background: #f0f0f0; padding: 0 3px; }
.hscroll .thumb { flex: 1; height: 15px; margin: 0 6px 0 5px; background: #cdcdcd; }
.left { transform: rotate(90deg); }
.right { transform: rotate(-90deg); }
.status { height: 24px; display: flex; align-items: center; padding: 0 8px 0 14px; gap: 4px; color: #293d5c; }
.status span { flex: 1; }
.details { width: 22px; height: 23px; justify-content: center; background: #cdeafb; border: 1px solid #39a2cd; }

.watermark { position: absolute; right: 48px; bottom: 46px; display: flex; align-items: center; gap: 4px; font: 400 34px/40px "DejaVu Sans Condensed", "Liberation Sans", sans-serif; color: #fff; text-shadow: 0 0 2px #aaa, 0 0 4px #ccc; }

/* Taskbar */
.taskbar { height: 40px; flex: none; display: flex; background: linear-gradient(90deg, #001922, #000c1f); color: #fff; }
.start { width: 49px; padding-left: 16px; }
.task-search { width: 287px; background: #f1f1f1; border: solid #b7b9bb; border-width: 1px 1px 1px 0; display: flex; align-items: center; padding-left: 12px; gap: 10px; color: #333; overflow: hidden; }
.task-search input { flex: 1; font-size: 14px; line-height: 20px; }
.task-search input::placeholder { color: #333; }
.earth { margin-right: 4px; }
.app { width: 49px; justify-content: center; }
.taskview { width: 50px; }
.edge { background: linear-gradient(#75bdea, #75bdea) center bottom / 40px 2px no-repeat; }
.active { background: #344750; border-bottom: 2px solid #75bdea; }
.tray { margin-left: auto; display: flex; align-items: center; gap: 9px; padding-right: 24px; }
.tray .up { height: 8px; }
.clock { display: flex; flex-direction: column; align-items: center; line-height: 18px; margin-right: 8px; }
```
